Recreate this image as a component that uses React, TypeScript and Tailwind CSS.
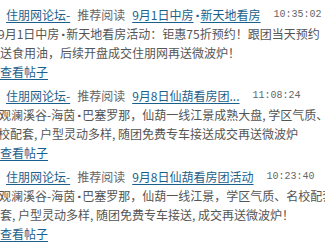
const cjk = { fontFamily: '"Noto Sans CJK SC", "Noto Sans", sans-serif' };

type Post = {
  title: string;
  time: string;
  lines: { text: string; shift: string }[];
};

const posts: Post[] = [
  {
    title: '9月1日中房▪新天地看房',
    time: '10:35:02',
    lines: [
      { text: '9月1日中房▪新天地看房活动：钜惠75折预约！跟团当天预约', shift: 'ml-[-2px]' },
      { text: '送食用油，后续开盘成交住朋网再送微波炉！', shift: 'ml-0' },
    ],
  },
  {
    title: '9月8日仙葫看房团...',
    time: '11:08:24',
    lines: [
      { text: '观澜溪谷-海茵▪巴塞罗那，仙葫一线江景成熟大盘, 学区气质、', shift: 'ml-[-1px]' },
      { text: '校配套, 户型灵动多样, 随团免费专车接送成交再送微波炉', shift: 'ml-[-2px]' },
    ],
  },
  {
    title: '9月8日仙葫看房团活动',
    time: '10:23:40',
    lines: [
      { text: '观澜溪谷-海茵▪巴塞罗那，仙葫一线江景，学区气质、名校配套', shift: 'ml-[-1px]' },
      { text: '套, 户型灵动多样, 随团免费专车接送, 成交再送微波炉！', shift: 'ml-0' },
    ],
  },
];

// the middle dot is a small half-width square, as in the old bitmap font
const WithDots = ({ text }: { text: string }) => {
  const parts = text.split('▪');
  return (
    <>
      {parts.map((p, i) => (
        <span key={i}>
          {i > 0 && (
            <span className="inline-block w-[7px] text-center text-[8px] leading-none align-[1px]">▪</span>
          )}
          {p}
        </span>
      ))}
    </>
  );
};

const PostItem = ({ post }: { post: Post }) => {
  return (
    <div className="flex flex-col">
      {/* title row */}
      <div className="flex h-[18px] items-center gap-[7px] whitespace-nowrap pl-[6px] text-[12px] leading-[18px]">
        <a className="text-[#1b5f8c] underline underline-offset-2">住朋网论坛-</a>
        <span className="text-[#666]">推荐阅读</span>
        <a className="text-[#1b5f8c] underline underline-offset-2">
          <WithDots text={post.title} />
        </a>
        <span
          className="ml-[6px] text-[10px] text-[#666]"
          style={{ fontFamily: '"Liberation Mono", monospace' }}
        >
          {post.time}
        </span>
      </div>

      {/* summary */}
      {post.lines.map((l, i) => (
        <div
          key={i}
          className={`${l.shift} h-[19px] whitespace-nowrap text-[12px] leading-[19px] text-[#555]`}
        >
          <WithDots text={l.text} />
        </div>
      ))}

      <a className="h-[20px] text-[12px] leading-[20px] text-[#1b5f8c] underline underline-offset-2">
        查看帖子
      </a>
    </div>
  );
};

export default function App() {
  return (
    <div className="h-[248px] w-[325px] overflow-hidden bg-white pt-[6px]" style={cjk}>
      <div className="flex flex-col gap-[5px]">
        {posts.map((p, i) => (
          <PostItem key={i} post={p} />
        ))}
      </div>
    </div>
  );
}
